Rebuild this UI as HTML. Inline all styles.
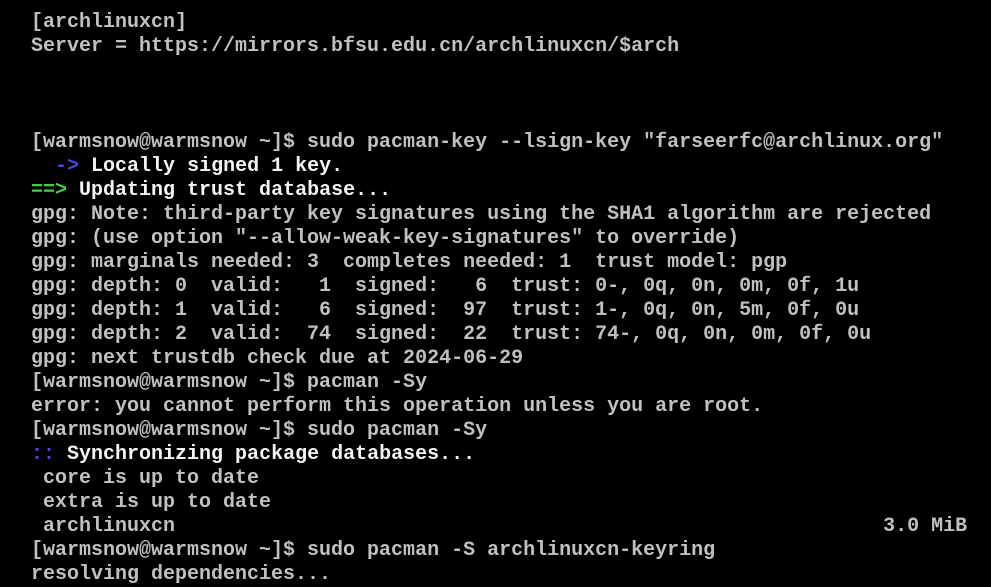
<!DOCTYPE html>
<html><head><meta charset="utf-8"><style>
html,body{margin:0;padding:0;background:#000;width:991px;height:579px;overflow:hidden}
pre{position:absolute;left:31px;top:11px;margin:0;font-family:"Liberation Mono",monospace;font-weight:bold;font-size:20px;line-height:24px;color:#c0c0c0;letter-spacing:0}
.w{color:#f4f4f4}.b{color:#4848e0}.g{color:#40d040}
</style></head><body><pre>[archlinuxcn]
Server = https://mirrors.bfsu.edu.cn/archlinuxcn/$arch



[warmsnow@warmsnow ~]$ sudo pacman-key --lsign-key "farseerfc@archlinux.org"
  <span class="b">-&gt;</span> <span class="w">Locally signed 1 key.</span>
<span class="g">==&gt;</span> <span class="w">Updating trust database...</span>
gpg: Note: third-party key signatures using the SHA1 algorithm are rejected
gpg: (use option "--allow-weak-key-signatures" to override)
gpg: marginals needed: 3  completes needed: 1  trust model: pgp
gpg: depth: 0  valid:   1  signed:   6  trust: 0-, 0q, 0n, 0m, 0f, 1u
gpg: depth: 1  valid:   6  signed:  97  trust: 1-, 0q, 0n, 5m, 0f, 0u
gpg: depth: 2  valid:  74  signed:  22  trust: 74-, 0q, 0n, 0m, 0f, 0u
gpg: next trustdb check due at 2024-06-29
[warmsnow@warmsnow ~]$ pacman -Sy
error: you cannot perform this operation unless you are root.
[warmsnow@warmsnow ~]$ sudo pacman -Sy
<span class="b">::</span> <span class="w">Synchronizing package databases...</span>
 core is up to date
 extra is up to date
 archlinuxcn                                                           3.0 MiB  1
[warmsnow@warmsnow ~]$ sudo pacman -S archlinuxcn-keyring
resolving dependencies...</pre></body></html>
